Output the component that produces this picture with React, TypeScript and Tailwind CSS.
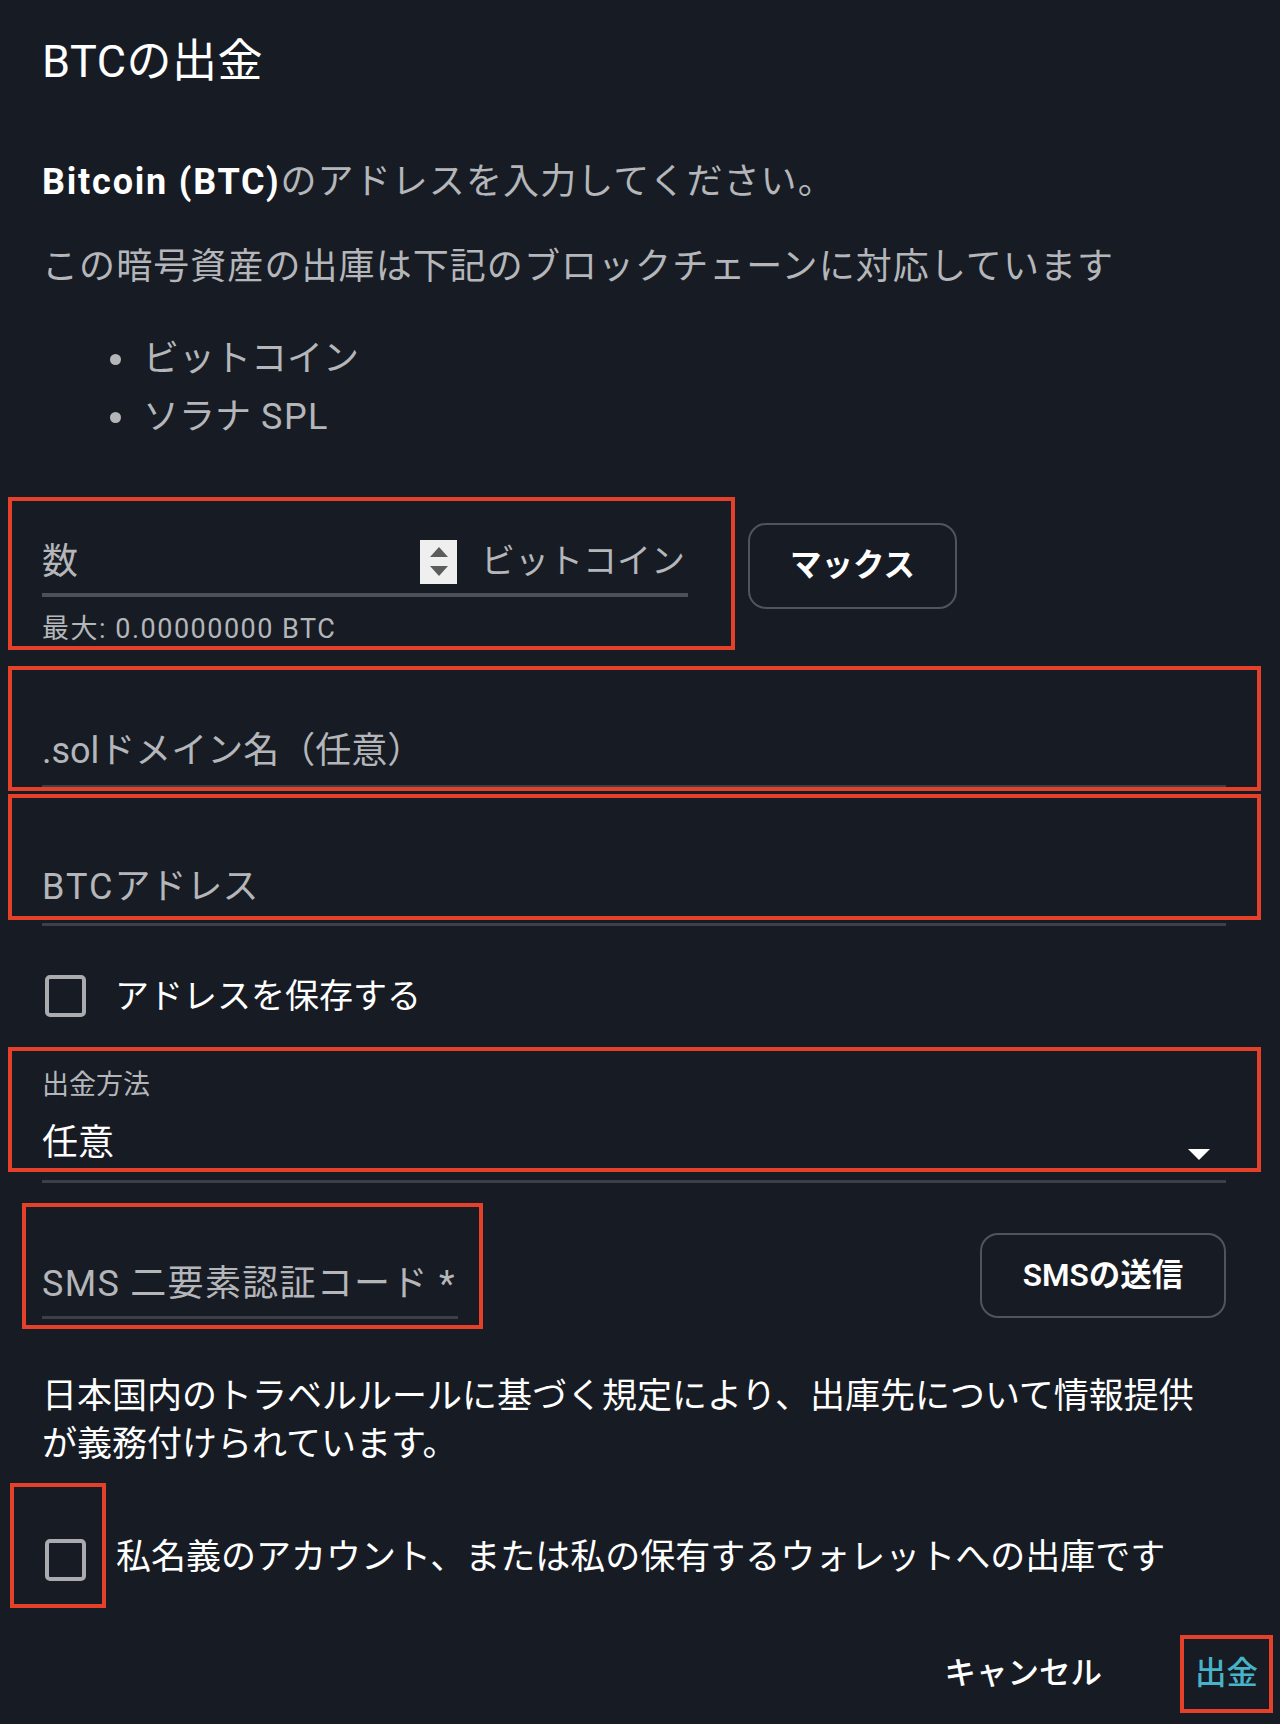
import React from "react";

const RED = "border-[4px] border-[#e5402a]";

function Checkbox() {
  return <div className="w-[41px] h-[42px] rounded-[5px] border-[4px] border-[#a9abaf] shrink-0" />;
}

function Spinner() {
  return (
    <div className="w-[37px] h-[44px] bg-[#efefef] flex flex-col items-center justify-center gap-[9px] shrink-0">
      <svg width="18" height="10" viewBox="0 0 18 10"><polygon points="9,0 18,10 0,10" fill="#5c5c5c" /></svg>
      <svg width="18" height="10" viewBox="0 0 18 10"><polygon points="0,0 18,0 9,10" fill="#5c5c5c" /></svg>
    </div>
  );
}

export default function App() {
  return (
    <div className="w-[1280px] min-h-[1724px] bg-[#171c24] font-[Roboto,Noto_Sans_CJK_JP,sans-serif] text-white overflow-hidden">
      {/* Title */}
      <div className="pt-[32px] pl-[42px] text-[45px] leading-[60px] font-normal tracking-[0.5px]">BTCの出金</div>

      {/* Intro */}
      <div className="mt-[66px] pl-[42px] text-[36px] leading-[48px] text-[#b4b6ba] tracking-[1.1px]">
        <span className="font-bold text-white tracking-[1.8px]">Bitcoin (BTC)</span>のアドレスを入力してください。
      </div>
      <div className="mt-[37px] pl-[42px] text-[36px] leading-[48px] text-[#b4b6ba] tracking-[1.07px]">
        この暗号資産の出庫は下記のブロックチェーンに対応しています
      </div>
      <ul className="mt-[39px] pl-[110px] text-[36px] leading-[58px] text-[#b4b6ba]">
        <li className="flex items-center"><span className="w-[11px] h-[11px] rounded-full bg-[#b4b6ba] mr-[22px]" />ビットコイン</li>
        <li className="flex items-center"><span className="w-[11px] h-[11px] rounded-full bg-[#b4b6ba] mr-[22px]" />ソラナ <span className="ml-[10px] tracking-[1.5px]">SPL</span></li>
      </ul>

      {/* Amount + Max */}
      <div className="mt-[51px] ml-[8px] flex items-start">
        <div className={`w-[727px] h-[153px] ${RED} pt-[29px] pl-[30px] pr-[43px]`}>
          <div className="h-[63px] flex items-center">
            <div className="flex-1 text-[36px] text-[#b4b6ba]">数</div>
            <Spinner />
            <div className="ml-[24px] mr-[3px] text-[34px] text-[#b4b6ba]">ビットコイン</div>
          </div>
          <div className="h-[4px] bg-[#4c5059]" />
          <div className="mt-[14px] text-[27px] leading-[36px] text-[#b4b6ba] tracking-[1.5px]">最大: 0.00000000 BTC</div>
        </div>
        <button className="ml-[13px] mt-[26px] w-[209px] h-[86px] rounded-[18px] border-[2px] border-[#50545c] text-[31.5px] font-semibold text-white flex items-center justify-center">
          マックス
        </button>
      </div>

      {/* .sol domain */}
      <div className={`mt-[16px] ml-[8px] w-[1253px] h-[125px] ${RED} pt-[57px] pl-[30px] pr-[31px]`}>
        <div className="text-[36px] leading-[48px] text-[#b4b6ba]">.solドメイン名（任意）</div>
        <div className="mt-[10px] h-[2px] bg-[#3b3f47]" />
      </div>

      {/* BTC address */}
      <div className={`mt-[3px] ml-[8px] w-[1253px] h-[126px] ${RED} pt-[65px] pl-[30px] pr-[31px]`}>
        <div className="text-[36px] leading-[48px] text-[#b4b6ba]"><span className="tracking-[2px]">BTC</span>アドレス</div>
      </div>
      <div className="mt-[3px] ml-[42px] w-[1184px] h-[3px] bg-[#3b3f47]" />

      {/* Save address */}
      <div className="mt-[44px] ml-[45px] h-[52px] flex items-center">
        <Checkbox />
        <div className="ml-[29px] text-[34px] leading-[48px] text-white">アドレスを保存する</div>
      </div>

      {/* Method select */}
      <div className={`mt-[25px] ml-[8px] w-[1253px] h-[125px] ${RED} pt-[16px] pl-[30px] pr-[47px] flex items-start`}>
        <div className="flex-1">
          <div className="text-[27px] leading-[36px] text-[#b4b6ba]">出金方法</div>
          <div className="mt-[16px] text-[36px] leading-[48px] text-white">任意</div>
        </div>
        <svg className="mt-[82px]" width="22" height="11" viewBox="0 0 22 11"><polygon points="0,0 22,0 11,11" fill="#ffffff" /></svg>
      </div>
      <div className="mt-[8px] ml-[42px] w-[1184px] h-[3px] bg-[#3b3f47]" />

      {/* SMS */}
      <div className="mt-[20px] ml-[22px] mr-[54px] flex items-start justify-between">
        <div className={`w-[461px] h-[126px] ${RED} pt-[53px] pl-[16px] pr-[21px]`}>
          <div className="text-[36px] leading-[48px] text-[#b4b6ba] whitespace-nowrap tracking-[1.3px]">SMS 二要素認証コード *</div>
          <div className="mt-[8px] h-[3px] bg-[#3b3f47]" />
        </div>
        <button className="mt-[30px] w-[246px] h-[85px] rounded-[18px] border-[2px] border-[#50545c] text-[31.5px] font-semibold text-white flex items-center justify-center">
          SMSの送信
        </button>
      </div>

      {/* Travel rule paragraph */}
      <div className="mt-[44px] pl-[42px] pr-[40px] text-[35px] leading-[48px] text-white">
        日本国内のトラベルルールに基づく規定により、出庫先について情報提供<br />が義務付けられています。
      </div>

      {/* Own wallet checkbox */}
      <div className="mt-[14px] ml-[10px] flex items-start">
        <div className={`w-[96px] h-[125px] ${RED} pt-[52px] pl-[31px]`}>
          <Checkbox />
        </div>
        <div className="ml-[10px] mt-[51px] text-[35px] leading-[48px] text-white whitespace-nowrap">
          私名義のアカウント、または私の保有するウォレットへの出庫です
        </div>
      </div>

      {/* Footer */}
      <div className="mt-[27px] mr-[7px] flex items-center justify-end">
        <button className="text-[31.5px] font-medium text-white">キャンセル</button>
        <div className={`ml-[78px] w-[93px] h-[78px] ${RED} flex items-center justify-center`}>
          <span className="text-[31.5px] font-medium text-[#48b3c8]">出金</span>
        </div>
      </div>
    </div>
  );
}
